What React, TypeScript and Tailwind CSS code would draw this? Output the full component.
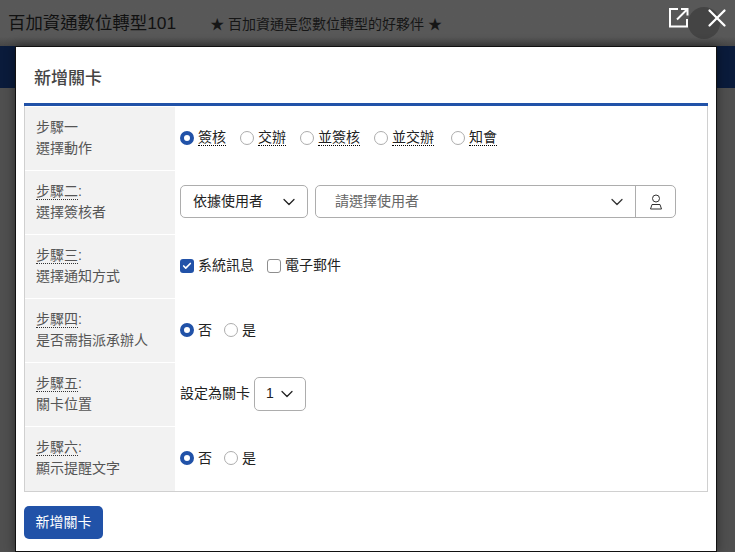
import React from "react";
import { ChevronDown, X, Check } from "lucide-react";

const font = { fontFamily: '"Liberation Sans", "Noto Sans CJK TC", sans-serif' };

function Radio({ on, label, dotted, extra }: { on?: boolean; label: string; dotted?: boolean; extra?: boolean }) {
  return (
    <span className={extra ? "ml-[3px] flex items-center gap-[4px]" : "flex items-center gap-[4px]"}>
      <span
        className={
          on
            ? "h-[14px] w-[14px] rounded-full border-[4px] border-[#2152a8] bg-white"
            : "h-[14px] w-[14px] rounded-full border border-[#adadad] bg-white"
        }
      />
      <span className={dotted ? "border-b border-dotted border-black leading-[16px]" : "leading-[16px]"}>{label}</span>
    </span>
  );
}

function Head({ step, colon = true, text }: { step: string; colon?: boolean; text: string }) {
  return (
    <div className="flex w-[150px] shrink-0 flex-col justify-center bg-[#f2f2f2] pb-[2px] pl-[11px] text-[14px] leading-[20px] text-[#555555]">
      <div className="flex">
        <span className={colon ? "h-[18px] border-b border-dotted border-[#333333] leading-[18px]" : "h-[18px] leading-[18px]"}>{step}</span>
        {colon && <span className="leading-[18px]">:</span>}
      </div>
      <div className="mt-[2px]">{text}</div>
    </div>
  );
}

function Row({ head, children, last }: { head: React.ReactNode; children: React.ReactNode; last?: boolean }) {
  return (
    <div className={last ? "flex h-[64px]" : "flex h-[64px] border-b border-white"}>
      {head}
      <div className="flex flex-1 items-center pb-[2px] pl-[5px] text-[14px] text-[#222222]">{children}</div>
    </div>
  );
}

export default function App() {
  return (
    <div className="relative h-[552px] w-[735px] overflow-hidden bg-[#4f4f4f]" style={font}>
      <div className="flex h-[46px] items-center bg-linear-to-b from-[#585858] from-[80%] to-[#464646] pl-[8px] text-[#111111]">
        <span className="text-[17.4px]">百加資通數位轉型101</span>
        <span className="ml-[34px] mt-[3px] text-[14px] text-[#161616]">★ 百加資通是您數位轉型的好夥伴 ★</span>
      </div>
      <div className="h-[42px] bg-[#0a1b3b]" />

      <div className="absolute left-[688px] top-[7px] h-[32px] w-[32px] rounded-full bg-[#444444]" />
      <svg className="absolute left-[668px] top-[7px]" width="22" height="22" viewBox="0 0 22 22" fill="none" stroke="white" strokeWidth="2">
        <path d="M10 2H2V19.5H19V12" />
        <path d="M13 2H19.5V8.5M19 2.5L9 12.5" />
      </svg>
      <X className="absolute left-[701.5px] top-[2.5px] text-white" size={30} strokeWidth={1.8} />

      <div className="absolute left-[15px] top-[46px] h-[506px] w-[702px] border border-[#111111] bg-white shadow-[0_0_10px_rgba(0,0,0,0.45)]">
        <div className="flex h-[56px] items-center pl-[18px] pt-[8px] text-[17px] font-medium text-[#444444]">新增關卡</div>
        <div className="mx-[8px] w-[684px] border-t-[3px] border-[#2152a8]">
          <div className="border border-t-0 border-[#d0d0d0] pt-[1px]">
            <Row head={<Head step="步驟一" colon={false} text="選擇動作" />}>
              <div className="flex gap-[14px]">
                <Radio on label="簽核" dotted />
                <Radio label="交辦" dotted />
                <Radio label="並簽核" dotted />
                <Radio label="並交辦" dotted />
                <Radio label="知會" dotted extra />
              </div>
            </Row>
            <Row head={<Head step="步驟二" text="選擇簽核者" />}>
              <div className="flex h-[33px] w-[128px] items-center justify-between rounded-[5px] border border-[#adadad] pl-[12px] pr-[8px]">
                <span>依據使用者</span>
                <ChevronDown size={20} strokeWidth={1.5} />
              </div>
              <div className="ml-[7px] flex h-[33px] w-[361px] items-center rounded-[5px] border border-[#adadad]">
                <div className="flex flex-1 items-center justify-between pl-[19px] pr-[8px] text-[#666666]">
                  <span>請選擇使用者</span>
                  <ChevronDown className="text-[#333333]" size={20} strokeWidth={1.5} />
                </div>
                <div className="flex h-full w-[40px] items-center justify-center border-l border-[#adadad]">
                  <svg width="14" height="16" viewBox="0 0 14 16" fill="none" stroke="#333333" strokeWidth="1">
                    <circle cx="7" cy="4.5" r="3.5" />
                    <path d="M3 10.5H11L12.5 15H1.5Z" />
                  </svg>
                </div>
              </div>
            </Row>
            <Row head={<Head step="步驟三" text="選擇通知方式" />}>
              <span className="flex items-center gap-[4px]">
                <span className="flex h-[14px] w-[14px] items-center justify-center rounded-[3px] bg-[#2152a8]">
                  <Check className="text-white" size={10} strokeWidth={4} />
                </span>
                系統訊息
              </span>
              <span className="ml-[13px] flex items-center gap-[4px]">
                <span className="h-[14px] w-[14px] rounded-[3px] border border-[#8e8e8e]" />
                電子郵件
              </span>
            </Row>
            <Row head={<Head step="步驟四" text="是否需指派承辦人" />}>
              <div className="flex gap-[12px]">
                <Radio on label="否" />
                <Radio label="是" />
              </div>
            </Row>
            <Row head={<Head step="步驟五" text="關卡位置" />}>
              <span>設定為關卡</span>
              <div className="ml-[4px] flex h-[34px] w-[52px] items-center gap-[3px] rounded-[5px] border border-[#adadad] pl-[11px]">
                <span>1</span>
                <ChevronDown size={20} strokeWidth={1.5} />
              </div>
            </Row>
            <Row last head={<Head step="步驟六" text="顯示提醒文字" />}>
              <div className="flex gap-[12px]">
                <Radio on label="否" />
                <Radio label="是" />
              </div>
            </Row>
          </div>
          <button className="mt-[14px] h-[33px] w-[79px] rounded-[5px] bg-[#2152a8] text-[14px] text-white">新增關卡</button>
        </div>
      </div>
    </div>
  );
}
